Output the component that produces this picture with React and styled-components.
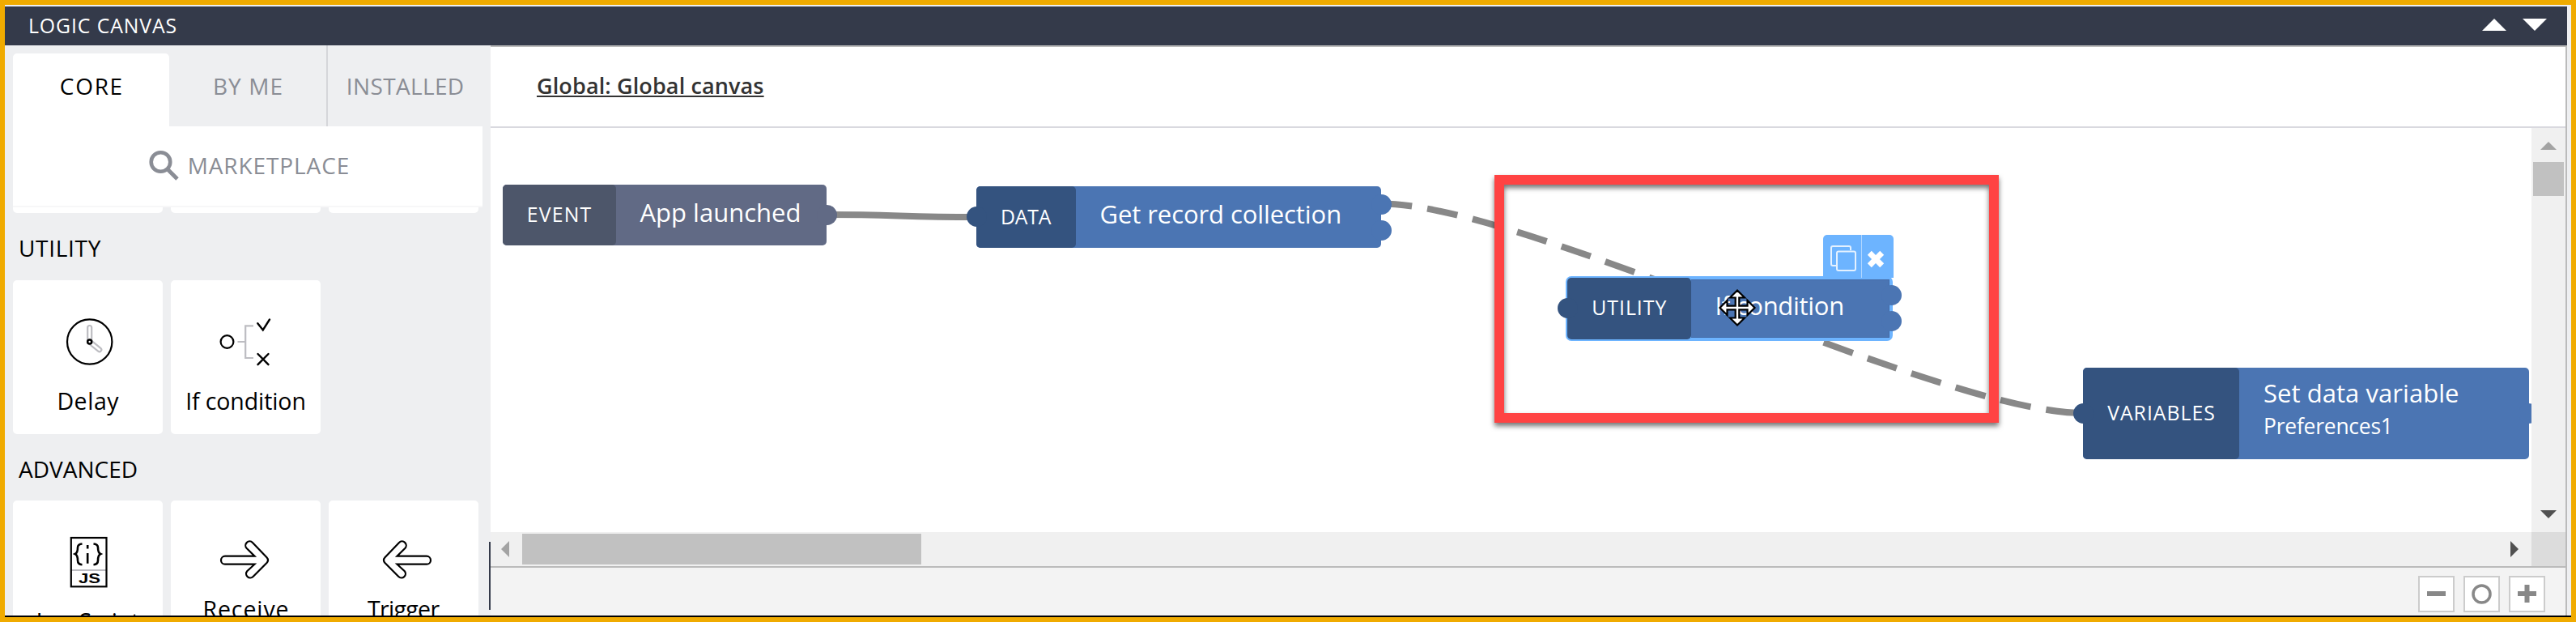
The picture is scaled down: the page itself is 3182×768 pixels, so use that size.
import React from 'react';
import styled, { createGlobalStyle, css } from 'styled-components';

const GlobalStyle = createGlobalStyle`
  *, *::before, *::after { box-sizing: border-box; }
  html, body { margin: 0; }
  body { font-family: "Open Sans", "Noto Sans", sans-serif; overflow: hidden; }
  svg { display: block; flex: none; }
`;

const Frame = styled.div`
  width: 3182px;
  height: 768px;
  border: 6px solid #f0ab00;
  background: #eeeff1;
  padding-top: 2px;
`;

const Panel = styled.div`
  width: 3170px;
  height: 754px;
  display: flex;
  flex-direction: column;
  border-bottom: 2px solid #000;
`;

const TitleBar = styled.header`
  width: 3165px;
  height: 48px;
  flex: none;
  display: flex;
  align-items: center;
  justify-content: space-between;
  background: #343a4a;
  color: #fff;
  font-size: 24.8px;
  padding: 0 25px 2px 29px;
`;

const CollapseArrows = styled.div`
  display: flex;
  gap: 20px;
  padding-bottom: 1px;
`;

const Text = styled.span`
  display: inline-block;
  white-space: nowrap;
  letter-spacing: ${(p) => p.$track || 0}px;
  margin-right: ${(p) => -(p.$track || 0)}px;
`;

const Main = styled.div`
  display: flex;
  flex: 1;
  min-height: 0;
`;

const Sidebar = styled.aside`
  width: 600px;
  flex: none;
  overflow: hidden;
  padding-left: 10px;
  display: flex;
  flex-direction: column;
`;

const Tabs = styled.nav`
  display: flex;
  height: 100px;
  flex: none;
`;

const Tab = styled.div`
  width: ${(p) => p.$w}px;
  display: flex;
  align-items: center;
  justify-content: center;
  padding-bottom: 1px;
  font-size: 28px;
  color: #8a8d95;
  ${(p) => p.$divider && css`border-right: 2px solid #d5d6da;`}
  ${(p) =>
    p.$active &&
    css`
      background: #fff;
      color: #000;
      margin-top: 10px;
      border-radius: 5px 5px 0 0;
      padding-bottom: 11px;
    `}
`;

const Marketplace = styled.div`
  width: 580px;
  height: 100px;
  flex: none;
  display: flex;
  align-items: center;
  justify-content: center;
  gap: 10px;
  padding: 0 0 2px 3px;
  background: #fff;
  border-bottom: 2px solid #f7f7f8;
  color: #8a8d95;
  font-size: 28px;
`;

const CardGrid = styled.div`
  display: grid;
  grid-template-columns: repeat(3, 185px);
  gap: 10px;
  flex: none;
`;

const CardEdge = styled.div`
  height: 7px;
  background: #fff;
  border-radius: 0 0 5px 5px;
`;

const SectionTitle = styled.h2`
  margin: 0;
  height: ${(p) => p.$h}px;
  flex: none;
  display: flex;
  align-items: center;
  padding: 3px 0 0 7px;
  font-size: 28px;
  font-weight: 400;
  color: #000;
`;

const Card = styled.div`
  height: 190px;
  display: flex;
  flex-direction: column;
  align-items: center;
  padding-top: 44px;
  background: #fff;
  border-radius: 5px;
`;

const CardLabel = styled.div`
  margin-top: ${(p) => (p.$raised ? 11 : 26)}px;
  line-height: 30px;
  font-size: 28.5px;
  color: #000;
`;

const IconSvg = styled.svg`
  overflow: visible;
  fill: none;
  stroke: #000;
  stroke-width: 2.2;
`;

const Splitter = styled.div`
  width: 2px;
  height: 84px;
  margin: 613px 0 0 -2px;
  flex: none;
  background: #343a4a;
`;

const Workspace = styled.section`
  width: 2565px;
  display: flex;
  flex-direction: column;
  border-top: 2px solid #bbb;
  border-right: 2px solid #bbb;
  background: #fff;
`;

const Breadcrumb = styled.div`
  height: 100px;
  flex: none;
  display: flex;
  align-items: center;
  padding: 0 0 3px 57px;
  border-bottom: 2px solid #d9d9df;
`;

const BreadcrumbLink = styled.a`
  font-size: 27px;
  font-weight: 600;
  letter-spacing: 0.12px;
  color: #333;
  text-decoration: underline;
  text-decoration-thickness: 2px;
  text-underline-offset: 2px;
`;

const CanvasGrid = styled.div`
  display: grid;
  grid-template-columns: 2521px 42px;
  grid-template-rows: 499px 42px;
`;

const Canvas = styled.div`
  position: relative;
  overflow: hidden;
  background: #fff;
`;

const Edges = styled.svg`
  fill: none;
  stroke: #888;
  stroke-width: 8;
`;

const VScroll = styled.div`
  display: flex;
  flex-direction: column;
  align-items: center;
  justify-content: space-between;
  padding: 17px 0;
  background: #f0f0f0;
`;

const VTop = styled.div`
  display: flex;
  flex-direction: column;
  align-items: center;
  gap: 15px;
`;

const VThumb = styled.div`
  width: 38px;
  height: 42px;
  background: #c1c1c1;
`;

const HScroll = styled.div`
  display: flex;
  align-items: center;
  justify-content: space-between;
  padding: 0 16px 0 13px;
  background: #f0f0f0;
`;

const HLeft = styled.div`
  display: flex;
  align-items: center;
  gap: 16px;
`;

const HThumb = styled.div`
  width: 493px;
  height: 38px;
  background: #c1c1c1;
`;

const Corner = styled.div`
  background: #dcdcdc;
`;

const Footer = styled.footer`
  flex: 1;
  display: flex;
  justify-content: flex-end;
  gap: 11px;
  padding: 10px 25px 0 0;
  border-top: 2px solid #bbb;
  background: #f3f3f3;
`;

const ZoomButton = styled.button`
  width: 45px;
  height: 45px;
  padding: 0;
  display: flex;
  align-items: center;
  justify-content: center;
  border: 2px solid #ccc;
  background: #fff;
`;

const Node = styled.div`
  position: absolute;
  left: ${(p) => p.$x}px;
  top: ${(p) => p.$y}px;
  width: ${(p) => p.$w}px;
  height: ${(p) => p.$h}px;
  display: flex;
  color: #fff;
  border-radius: 5px;
  background: ${(p) => (p.$tone === 'event' ? '#616a85' : '#4b75b3')};
  ${(p) => p.$selected && css`background: #6db4ff; box-shadow: 0 0 0 2px #6db4ff;`}
`;

const NodeKind = styled.div`
  width: ${(p) => p.$w}px;
  flex: none;
  display: flex;
  align-items: center;
  justify-content: center;
  padding-bottom: 3px;
  font-size: 24.8px;
  border-radius: 5px;
  background: ${(p) => (p.$tone === 'event' ? '#4d566a' : '#34537f')};
`;

const NodeBody = styled.div`
  flex: 1;
  display: flex;
  flex-direction: column;
  justify-content: center;
  padding: 0 0 ${(p) => (p.$double ? 10 : 7)}px 30px;
  font-size: 31px;
  line-height: 41px;
  ${(p) =>
    p.$selected &&
    css`
      margin: 2px 2px 2px 0;
      background: #4b75b3;
      border: solid #4369a5;
      border-width: 1px 1px 1px 0;
      padding-bottom: 6px;
    `}
`;

const NodeSub = styled.div`
  font-size: 26.4px;
  letter-spacing: -0.2px;
`;

const Port = styled.i`
  position: absolute;
  width: 25px;
  height: 25px;
  border-radius: 50%;
  top: ${(p) => p.$cy - 12.5}px;
  ${(p) => (p.$side === 'in' ? 'left: -12.5px;' : 'right: -12.8px;')}
  background: ${(p) =>
    p.$tone === 'event' ? '#616a85' : p.$side === 'in' ? '#34537f' : '#4b75b3'};
`;

const NodeTools = styled.div`
  position: absolute;
  right: -2.5px;
  bottom: 76px;
  display: flex;
  height: 53px;
  border-radius: 5px 5px 0 0;
  background: #6db4ff;
`;

const Tool = styled.div`
  width: ${(p) => p.$w}px;
  display: flex;
  align-items: center;
  justify-content: center;
  padding: 6px 0 0 4px;
  & + & {
    border-left: 1px solid #b4d8ff;
    padding: 8px 5px 0 0;
  }
`;

const Highlight = styled.div`
  position: absolute;
  left: 1240px;
  top: 58px;
  width: 623px;
  height: 306px;
  border: 12px solid #ff4343;
  filter: drop-shadow(0 4px 3px rgba(0, 0, 0, 0.55));
`;

const MoveCursor = styled.svg`
  position: absolute;
  left: 1516px;
  top: 198px;
`;

const triangles = {
  up: (w, h) => `0,${h} ${w / 2},0 ${w},${h}`,
  down: (w, h) => `0,0 ${w},0 ${w / 2},${h}`,
  left: (w, h) => `${w},0 ${w},${h} 0,${h / 2}`,
  right: (w, h) => `0,0 ${w},${h / 2} 0,${h}`,
};

const Triangle = ({ dir, w, h, color }) => (
  <svg width={w} height={h}>
    <polygon points={triangles[dir](w, h)} fill={color} />
  </svg>
);

const SearchIcon = () => (
  <svg width="38" height="38" viewBox="0 0 38 38" fill="none" stroke="#8a8d95">
    <circle cx="14.5" cy="15" r="11.8" strokeWidth="4.6" />
    <path d="M23.5 24.5 L35 36" strokeWidth="5" />
  </svg>
);

const ClockIcon = () => (
  <IconSvg width="64" height="64">
    <circle cx="33.7" cy="32" r="27.7" />
    <g stroke="#bdbdc2">
      <rect x="31.2" y="12" width="5" height="20" rx="2.5" />
      <rect x="31.2" y="14" width="5" height="20" rx="2.5" transform="rotate(129 33.7 32)" />
    </g>
    <circle cx="33.7" cy="32" r="2.5" fill="#fff" strokeWidth="2.5" />
  </IconSvg>
);

const BranchIcon = () => (
  <IconSvg width="64" height="64">
    <circle cx="8.5" cy="32" r="7.9" />
    <path d="M21.5 32H31.2M41 12.3H31.2V52H41" stroke="#bdbdc2" />
    <path
      d="M46.3 9.3L52.8 17.5L61 4.5M46.5 47L59.5 60.2M59.5 47L46.5 60.2"
      strokeLinecap="round"
      strokeWidth="2.4"
    />
  </IconSvg>
);

const ScriptIcon = () => (
  <IconSvg width="64" height="64">
    <path d="M11 42H54" stroke="#bdbdc2" />
    <rect x="10.8" y="2" width="43.7" height="60.3" />
    <path
      d="M24.5 9.5Q19 10 19 14Q19 20.5 15.8 22Q19 23.5 19 30Q19 34.8 24.5 35.2M38.5 9.5Q44 10 44 14Q44 20.5 47.2 22Q44 23.5 44 30Q44 34.8 38.5 35.2M31.2 11V15.5M31.2 21V33.8"
      strokeWidth="2.6"
    />
    <text
      x="20"
      y="58"
      textLength="27"
      lengthAdjust="spacingAndGlyphs"
      fontFamily="Liberation Sans, sans-serif"
      fontSize="16"
      fontWeight="700"
      fill="#000"
      stroke="none"
    >
      JS
    </text>
  </IconSvg>
);

const arrowPath =
  'M6 24.7H42.5L32.7 15A4.9 4.9 0 0 1 40 8L57.5 26.3Q60.5 29.7 57.5 33L40.6 50A5 5 0 0 1 33.2 43.3L42.5 34.7H6A5 5 0 0 1 6 24.7Z';

const ReceiveIcon = () => (
  <IconSvg width="64" height="64">
    <path d={arrowPath} />
  </IconSvg>
);

const TriggerIcon = () => (
  <IconSvg width="64" height="64">
    <path d={arrowPath} transform="matrix(-1 0 0 1 66 0)" />
  </IconSvg>
);

const CopyIcon = () => (
  <svg width="32" height="32" fill="none" stroke="#e4f1ff" strokeWidth="2">
    <path d="M8 25H3Q1 25 1 23V3Q1 1 3 1H23Q25 1 25 3V6" />
    <rect x="8" y="7.5" width="23" height="23.5" rx="2" />
  </svg>
);

const CloseIcon = () => (
  <svg width="22" height="22" stroke="#fff" strokeWidth="7">
    <path d="M3.3 3.3L18.7 18.7M18.7 3.3L3.3 18.7" />
  </svg>
);

const cards = {
  utility: [
    { label: 'Delay', track: 0.55, Icon: ClockIcon },
    { label: 'If condition', track: -0.1, Icon: BranchIcon },
  ],
  advanced: [
    { label: 'JavaScript', track: -0.2, Icon: ScriptIcon },
    { label: 'Receive', track: 0.9, Icon: ReceiveIcon, raised: true },
    { label: 'Trigger', track: -0.65, Icon: TriggerIcon, raised: true },
  ],
};

const Cards = ({ items }) => (
  <CardGrid>
    {items.map(({ label, track, Icon, raised }) => (
      <Card key={label}>
        <Icon />
        <CardLabel $raised={raised}>
          <Text $track={track}>{label}</Text>
        </CardLabel>
      </Card>
    ))}
  </CardGrid>
);

const nodes = [
  { x: 14.5, y: 70, w: 400.5, h: 75, kind: 'EVENT', kindW: 140, kindTrack: 1.15, title: 'App launched', tone: 'event', outs: [37.5] },
  { x: 600, y: 72, w: 500, h: 76, kind: 'DATA', kindW: 122.5, kindTrack: -0.2, title: 'Get record collection', titleTrack: -0.08, input: 37.5, outs: [22, 54] },
  { x: 1330, y: 184.5, w: 400, h: 76, kind: 'UTILITY', kindW: 152.5, kindTrack: 1, title: 'If condition', titleTrack: -0.3, input: 38, outs: [21.5, 54], selected: true },
  { x: 1967, y: 296, w: 550.5, h: 113, kind: 'VARIABLES', kindW: 193, kindTrack: 1, title: 'Set data variable', titleTrack: 0.05, sub: 'Preferences1', input: 56.5, outs: [56.5] },
];

const CanvasNode = ({ n }) => (
  <Node $x={n.x} $y={n.y} $w={n.w} $h={n.h} $tone={n.tone} $selected={n.selected}>
    {n.outs.map((cy) => (
      <Port key={cy} $side="out" $cy={cy} $tone={n.tone} />
    ))}
    {n.input && <Port $side="in" $cy={n.input} />}
    <NodeKind $w={n.kindW} $tone={n.tone}>
      <Text $track={n.kindTrack}>{n.kind}</Text>
    </NodeKind>
    <NodeBody $double={!!n.sub} $selected={n.selected}>
      <Text $track={n.titleTrack}>{n.title}</Text>
      {n.sub && <NodeSub>{n.sub}</NodeSub>}
    </NodeBody>
    {n.selected && (
      <NodeTools>
        <Tool $w={47}>
          <CopyIcon />
        </Tool>
        <Tool $w={40}>
          <CloseIcon />
        </Tool>
      </NodeTools>
    )}
  </Node>
);

export default function App() {
  return (
    <Frame>
      <GlobalStyle />
      <Panel>
        <TitleBar>
          <Text $track={0.9}>LOGIC CANVAS</Text>
          <CollapseArrows>
            <Triangle dir="up" w={30} h={15} color="#fff" />
            <Triangle dir="down" w={30} h={15} color="#fff" />
          </CollapseArrows>
        </TitleBar>
        <Main>
          <Sidebar>
            <Tabs>
              <Tab $w={193} $active>
                <Text $track={1.7}>CORE</Text>
              </Tab>
              <Tab $w={196} $divider>
                <Text $track={1.1}>BY ME</Text>
              </Tab>
              <Tab $w={191}>
                <Text $track={0.35}>INSTALLED</Text>
              </Tab>
            </Tabs>
            <Marketplace>
              <SearchIcon />
              <Text $track={0.9}>MARKETPLACE</Text>
            </Marketplace>
            <CardGrid>
              <CardEdge />
              <CardEdge />
              <CardEdge />
            </CardGrid>
            <SectionTitle $h={83}>
              <Text $track={0.7}>UTILITY</Text>
            </SectionTitle>
            <Cards items={cards.utility} />
            <SectionTitle $h={82}>
              <Text $track={0}>ADVANCED</Text>
            </SectionTitle>
            <Cards items={cards.advanced} />
          </Sidebar>
          <Splitter />
          <Workspace>
            <Breadcrumb>
              <BreadcrumbLink>Global: Global canvas</BreadcrumbLink>
            </Breadcrumb>
            <CanvasGrid>
              <Canvas>
                <Edges width="2521" height="499">
                  <path d="M415 107C500 107 510 110 600 110" />
                  <path d="M1100 93.5C1278 93.5 1789 352 1967 352" strokeDasharray="38.3 19.15" />
                </Edges>
                {nodes.map((n) => (
                  <CanvasNode key={n.kind} n={n} />
                ))}
                <Highlight />
                <MoveCursor width="48" height="48" viewBox="-24 -24 48 48">
                  <path
                    d="M0 -21.5L9 -12.5H2.3V-2.3H12.5V-9L21.5 0L12.5 9V2.3H2.3V12.5H9L0 21.5L-9 12.5H-2.3V2.3H-12.5V9L-21.5 0L-12.5 -9V-2.3H-2.3V-12.5H-9Z"
                    fill="#fff"
                    stroke="#000"
                    strokeWidth="2.2"
                  />
                </MoveCursor>
              </Canvas>
              <VScroll>
                <VTop>
                  <Triangle dir="up" w={20} h={10} color="#a3a3a3" />
                  <VThumb />
                </VTop>
                <Triangle dir="down" w={20} h={10} color="#505050" />
              </VScroll>
              <HScroll>
                <HLeft>
                  <Triangle dir="left" w={10} h={20} color="#a3a3a3" />
                  <HThumb />
                </HLeft>
                <Triangle dir="right" w={10} h={20} color="#505050" />
              </HScroll>
              <Corner />
            </CanvasGrid>
            <Footer>
              <ZoomButton>
                <svg width="23" height="24" stroke="#888" strokeWidth="6">
                  <path d="M0 11H23" />
                </svg>
              </ZoomButton>
              <ZoomButton>
                <svg width="25" height="25" fill="none" stroke="#888" strokeWidth="3.5">
                  <circle cx="12.5" cy="12.5" r="10.5" />
                </svg>
              </ZoomButton>
              <ZoomButton>
                <svg width="23" height="24" stroke="#888" strokeWidth="6">
                  <path d="M0 11H23M11.5 0V22" />
                </svg>
              </ZoomButton>
            </Footer>
          </Workspace>
        </Main>
      </Panel>
    </Frame>
  );
}
